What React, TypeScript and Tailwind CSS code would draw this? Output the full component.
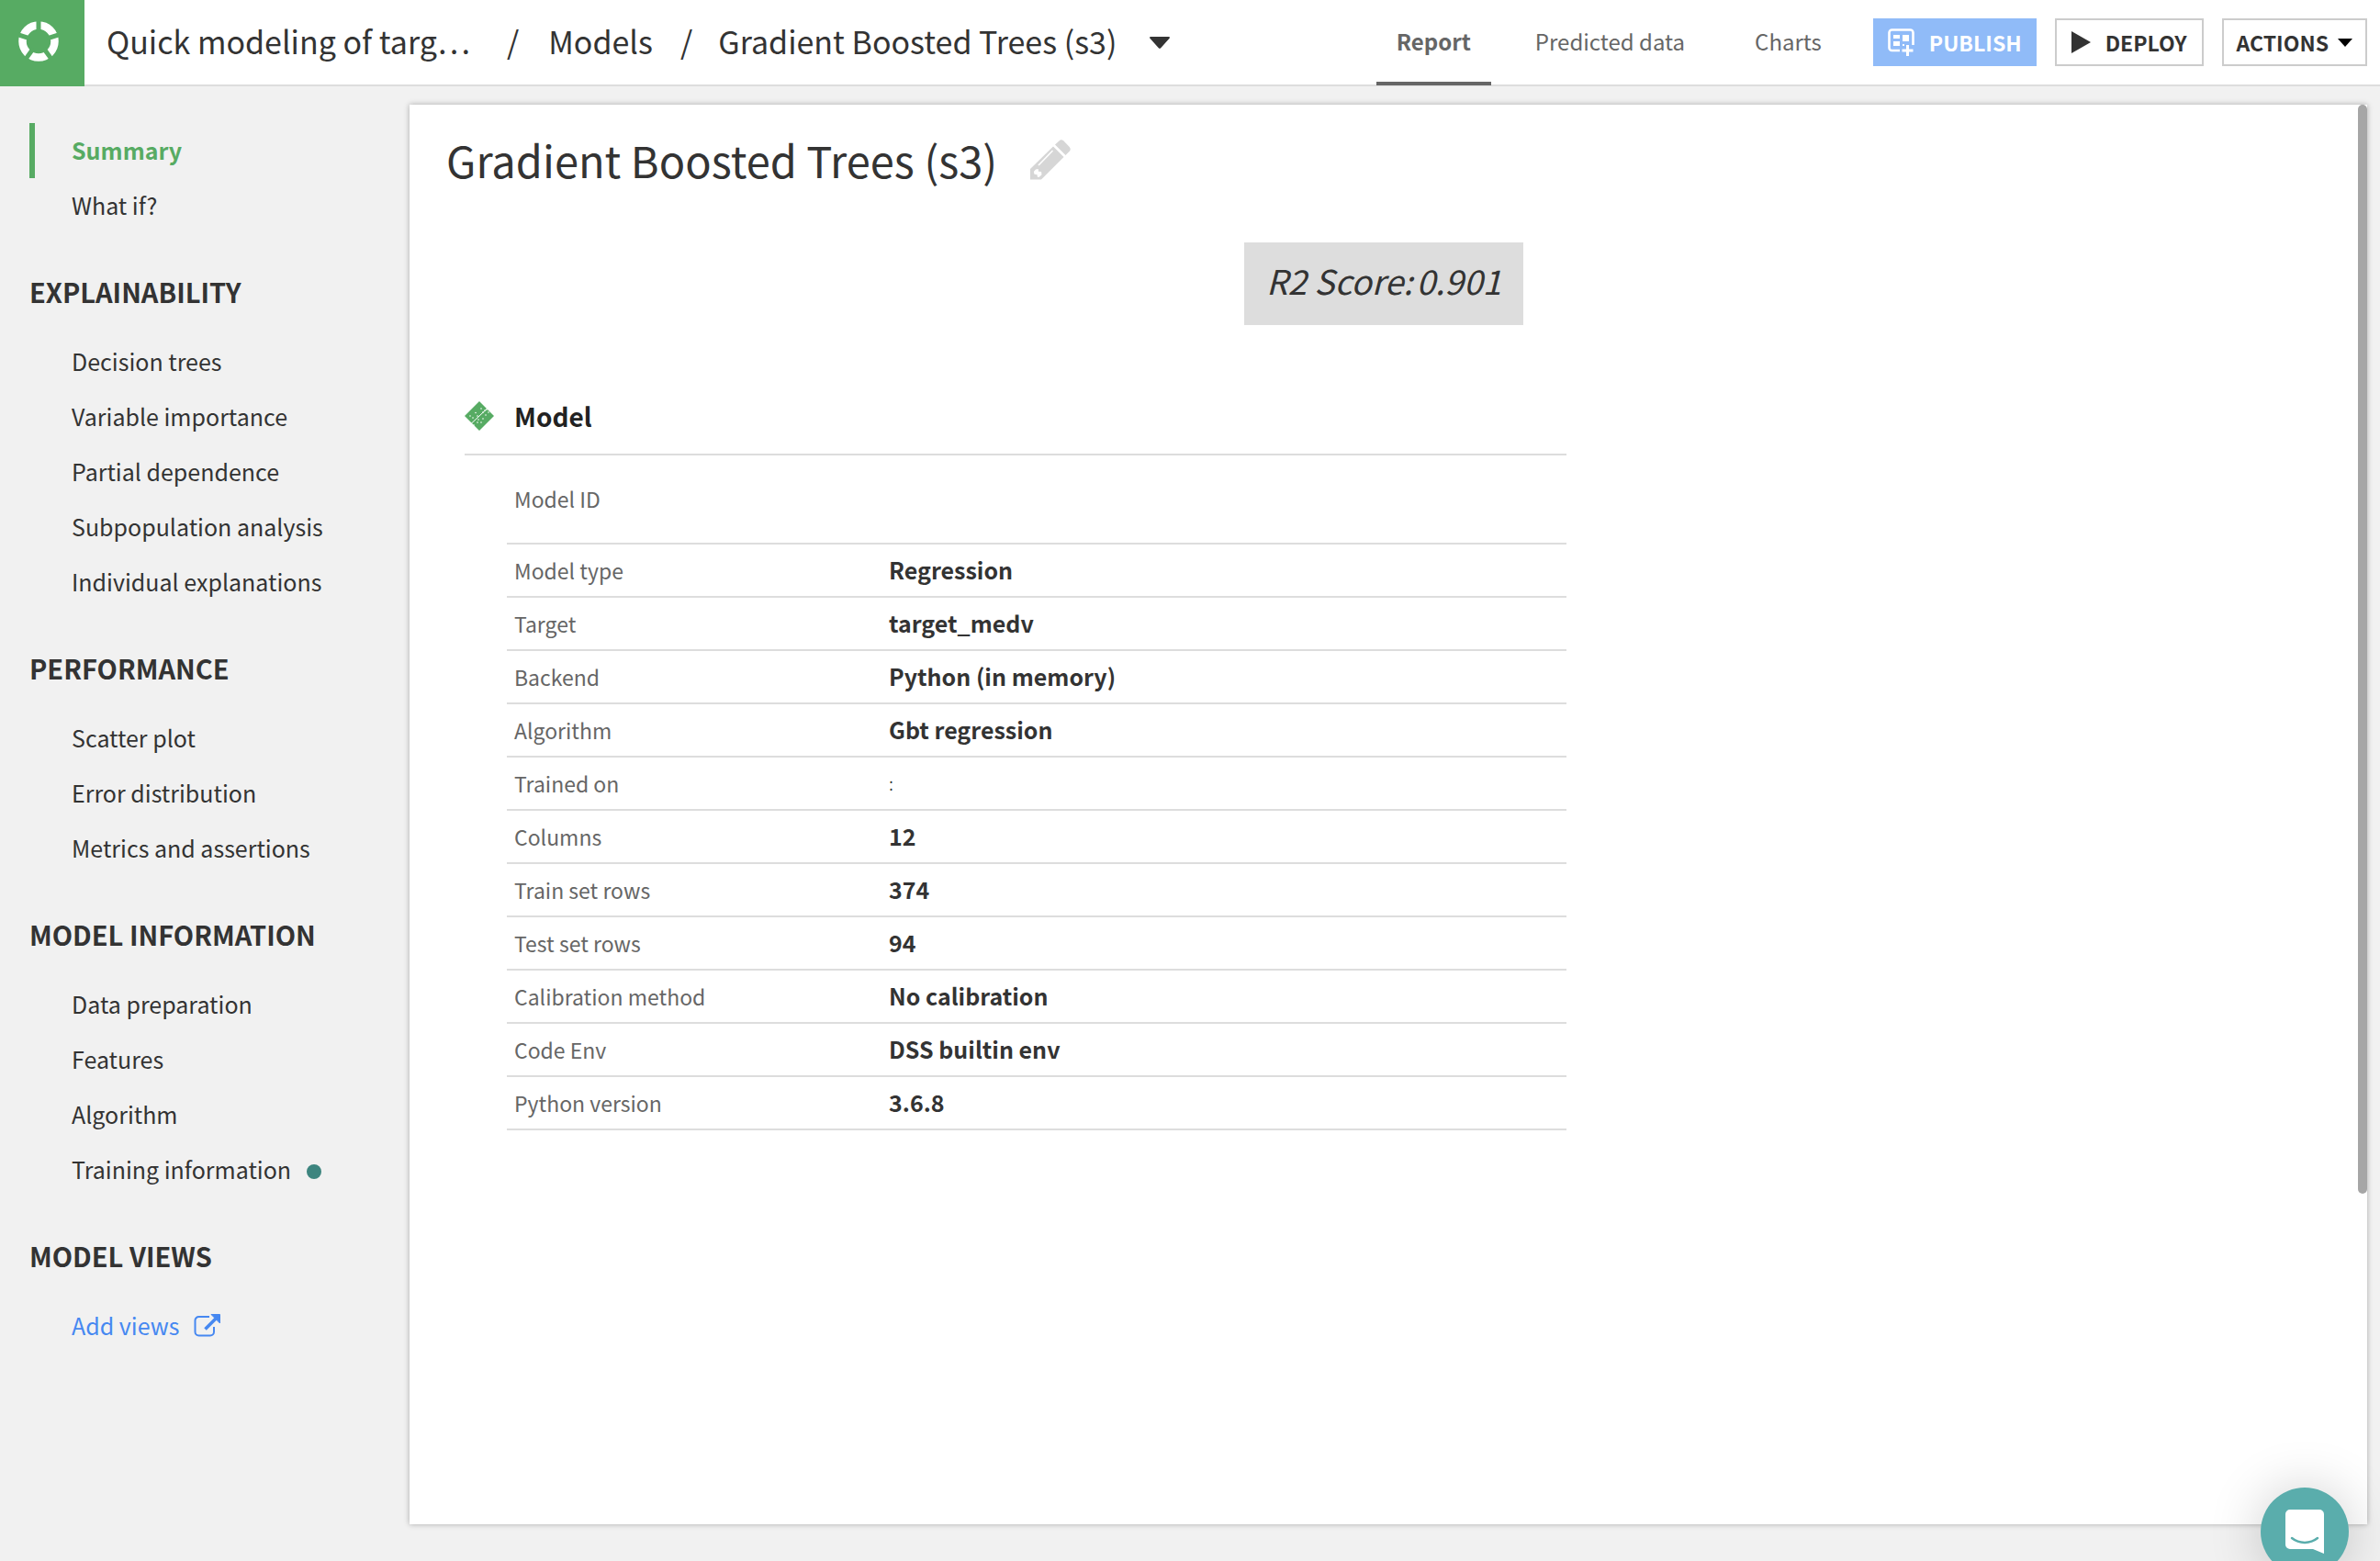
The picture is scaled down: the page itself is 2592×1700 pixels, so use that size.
import React from "react";

const groups = [
  {
    title: "EXPLAINABILITY",
    items: [
      "Decision trees",
      "Variable importance",
      "Partial dependence",
      "Subpopulation analysis",
      "Individual explanations",
    ],
  },
  {
    title: "PERFORMANCE",
    items: ["Scatter plot", "Error distribution", "Metrics and assertions"],
  },
  {
    title: "MODEL INFORMATION",
    items: ["Data preparation", "Features", "Algorithm", "Training information"],
  },
];

const rows: [string, string][] = [
  ["Model type", "Regression"],
  ["Target", "target_medv"],
  ["Backend", "Python (in memory)"],
  ["Algorithm", "Gbt regression"],
  ["Trained on", ":"],
  ["Columns", "12"],
  ["Train set rows", "374"],
  ["Test set rows", "94"],
  ["Calibration method", "No calibration"],
  ["Code Env", "DSS builtin env"],
  ["Python version", "3.6.8"],
];

function Logo() {
  return (
    <svg viewBox="-22 -22 44 44" className="h-11 w-11" aria-hidden="true">
      <circle r="17.5" fill="none" stroke="#fff" strokeWidth="8.5" />
      {[0, 72, 144, 216, 288].map((a) => (
        <rect key={a} x="-2.5" y="-23" width="5" height="13" fill="#57ab63" transform={`rotate(${a})`} />
      ))}
    </svg>
  );
}

function Caret({ className }: { className: string }) {
  return (
    <svg viewBox="0 0 22 13" className={className} fill="currentColor" aria-hidden="true">
      <path d="M1.2 0h19.6c1 0 1.4 1 .8 1.8l-9.4 10.4c-.7.8-1.7.8-2.4 0L.4 1.8C-.2 1 .2 0 1.2 0z" />
    </svg>
  );
}

function PublishIcon() {
  return (
    <svg viewBox="0 0 29 31" className="h-[31px] w-[29px]" fill="none" aria-hidden="true">
      <path d="M13 24H4.500A3 3 0 0 1 1.500 21V4.500A3 3 0 0 1 4.500 1.500h20A3 3 0 0 1 27.500 4.500V18" stroke="#fff" strokeWidth="2.600" />
      <path d="M6 7h7v4H6zM6 14h7v5H6zM16 7h7v7h-7zM16 17h2v2h-2z" fill="#fff" />
      <path d="M21.500 18v12M15.500 24h12" stroke="#fff" strokeWidth="3" />
    </svg>
  );
}

function PencilIcon() {
  return (
    <svg viewBox="0 0 44 44" className="h-11 w-11" fill="#d6d6d6" aria-hidden="true">
      <path d="M27 5.500 38.500 17 43 12.500c1-1.500 1-3-.3-4.500L36 1c-1.500-1.200-3-1-4 0z" />
      <path d="M25 7.500 36.500 19 12 43.500H0V32z" />
      <path d="M24.500 12 9 28" stroke="#fff" strokeWidth="1.600" />
      <path d="M6 32.500 3.800 35l.7 2.800 3 .5.5 2.700 2.200-.5 2.300-2.300-.4-3.200-3.100-.3-.3-2.700z" fill="#fff" />
    </svg>
  );
}

function ModelIcon() {
  const dots = [
    [18, 8], [20, 12], [12, 12.5], [9, 18], [14, 16], [23, 15], [20, 19],
    [15, 20], [18, 23], [10, 26], [14, 23], [24, 9], [22, 10], [26, 12], [6, 16],
  ];
  return (
    <svg viewBox="0 0 32 32" className="h-8 w-8" aria-hidden="true">
      <path d="M16 0 32 16 16 32 0 16z" fill="#57ab63" />
      <path d="M7 24.500 25 7.500" stroke="#fff" strokeWidth="1" />
      {dots.map(([x, y]) => (
        <circle key={`${x}-${y}`} cx={x} cy={y} r="0.8" fill="#fff" />
      ))}
    </svg>
  );
}

function ExternalIcon() {
  return (
    <svg viewBox="0 0 30 26" className="h-[26px] w-[30px]" fill="none" stroke="#4688f1" aria-hidden="true">
      <path d="M17 3H5.500A4 4 0 0 0 1.500 7v12.500a4 4 0 0 0 4 4H18a4 4 0 0 0 4-4V14" strokeWidth="2" />
      <path d="M12.500 16.500 24 5" strokeWidth="3.500" />
      <path d="M19 .5h9.500V10z" fill="#4688f1" strokeWidth="1" />
    </svg>
  );
}

function NavItem({ label, dot }: { label: string; dot?: boolean }) {
  return (
    <li>
      <a href="#" className="flex h-15 items-center gap-[17px] pl-[78px]">
        {label}
        {dot && <span className="mt-1 h-4 w-4 rounded-full bg-[#3d857f]" />}
      </a>
    </li>
  );
}

function GroupTitle({ children }: { children: React.ReactNode }) {
  return <h2 className="flex h-[110px] items-center pt-[18px] pl-8 text-[29px] font-bold">{children}</h2>;
}

export default function App() {
  return (
    <div className="flex min-h-screen flex-col bg-[#f1f1f1] font-['Noto_Sans_CJK_SC','Noto_Sans',sans-serif] text-[#333]">
      <header className="flex h-[94px] bg-white">
        <a href="#" aria-label="Home" className="flex w-[92px] shrink-0 items-center justify-center bg-[#57ab63] pr-2 pb-1">
          <Logo />
        </a>
        <div className="flex flex-1 items-center border-b-2 border-[#ddd] pr-[14px]">
          <nav aria-label="Breadcrumb" className="flex items-center pb-1 pl-6 text-[34px] whitespace-nowrap">
            <a href="#">Quick modeling of targ…</a>
            <span className="pr-8 pl-10">/</span>
            <a href="#">Models</a>
            <span className="pr-7 pl-[30px]">/</span>
            <a href="#">Gradient Boosted Trees (s3)</a>
            <button type="button" aria-label="Switch model" className="ml-9 pt-1">
              <Caret className="h-[13px] w-[22px]" />
            </button>
          </nav>
          <nav aria-label="Views" className="ml-auto flex h-[94px] text-2xl whitespace-nowrap text-[#666]">
            <a href="#" className="flex items-center border-b-4 border-[#666] px-[22px] pt-0.5 font-bold">Report</a>
            <a href="#" className="flex items-center px-12 pb-0.5">Predicted data</a>
            <a href="#" className="flex items-center pr-14 pb-0.5 pl-7">Charts</a>
          </nav>
          <div className="flex gap-5 text-[23px] font-bold whitespace-nowrap">
            <button type="button" className="flex h-[52px] items-center gap-4 bg-[#90bbf8] px-4 text-white">
              <PublishIcon />
              PUBLISH
            </button>
            <button type="button" className="flex h-[52px] items-center gap-4 border-2 border-[#ccc] px-4">
              <svg viewBox="0 0 21 24" className="h-6 w-[21px]" fill="currentColor" aria-hidden="true">
                <path d="M0 0 21 12 0 24z" />
              </svg>
              DEPLOY
            </button>
            <button type="button" className="flex h-[52px] items-center gap-[10px] border-2 border-[#ccc] px-[14px]">
              ACTIONS
              <svg viewBox="0 0 16 9" className="h-[9px] w-4" fill="#000" aria-hidden="true">
                <path d="M0 0h16L8 9z" />
              </svg>
            </button>
          </div>
        </div>
      </header>

      <div className="flex flex-1">
        <nav aria-label="Report sections" className="w-[446px] shrink-0 pt-10 text-[25px]">
          <ul>
            <li>
              <a href="#" className="ml-8 flex h-15 items-center border-l-6 border-[#57ab63] pl-10 font-bold text-[#57ab63]">
                Summary
              </a>
            </li>
            <NavItem label="What if?" />
          </ul>
          {groups.map((g) => (
            <section key={g.title}>
              <GroupTitle>{g.title}</GroupTitle>
              <ul>
                {g.items.map((i) => (
                  <NavItem key={i} label={i} dot={i === "Training information"} />
                ))}
              </ul>
            </section>
          ))}
          <GroupTitle>MODEL VIEWS</GroupTitle>
          <a href="#" className="flex h-15 items-center gap-4 pl-[78px] text-[#4688f1]">
            Add views
            <ExternalIcon />
          </a>
        </nav>

        <main className="relative mt-5 mr-[14px] mb-10 flex-1 bg-white pr-[10px] shadow-[0_0_6px_rgba(0,0,0,0.3)]">
          <div className="absolute top-0 right-0 h-[1186px] w-[10px] rounded-full bg-[#a6a6a6]" />
          <div className="flex h-[150px] items-center gap-9 px-10 pb-[30px]">
            <h1 className="text-[47px]">Gradient Boosted Trees (s3)</h1>
            <button type="button" aria-label="Edit name">
              <PencilIcon />
            </button>
          </div>
          <p className="mx-auto flex h-[90px] w-fit items-center gap-1 bg-[#ddd] px-6 pb-[6px] text-[37px] italic">
            <span>R2 Score:</span>
            <span>0.901</span>
          </p>
          <section className="ml-15 max-w-[1200px] pt-[60px]">
            <h2 className="flex h-[82px] items-center gap-[22px] border-b-2 border-[#ddd] pb-0.5 text-[28px] font-semibold text-[#222]">
              <ModelIcon />
              Model
            </h2>
            <div className="pl-[46px]">
              <table className="w-full text-left text-[23px]">
                <tbody>
                  <tr className="h-24 border-b-2 border-[#ddd]">
                    <th scope="row" className="w-[408px] pl-2 font-normal text-[#666]">Model ID</th>
                    <td />
                  </tr>
                  {rows.map(([k, v]) => (
                    <tr key={k} className="h-[58px] border-b-2 border-[#ddd]">
                      <th scope="row" className="pl-2 font-normal text-[#666]">{k}</th>
                      <td className={v === ":" ? "pl-2 text-xl font-light" : "pl-2 text-[25px] font-bold"}>{v}</td>
                    </tr>
                  ))}
                </tbody>
              </table>
            </div>
          </section>
        </main>
      </div>

      <button
        type="button"
        aria-label="Open chat"
        className="fixed right-[34px] -bottom-4 flex h-24 w-24 items-center justify-center rounded-full bg-[#5aadac] shadow-[0_2px_60px_rgba(0,0,0,0.2)]"
      >
        <svg viewBox="0 0 42 48" className="h-12 w-[42px]" aria-hidden="true">
          <path d="M5 0h32a5 5 0 0 1 5 5v43l-12-5H5a5 5 0 0 1-5-5V5a5 5 0 0 1 5-5z" fill="#fff" />
          <path d="M7 31c8 6.500 20 6.500 28 0" fill="none" stroke="#5aadac" strokeWidth="2.500" strokeLinecap="round" />
        </svg>
      </button>
    </div>
  );
}
